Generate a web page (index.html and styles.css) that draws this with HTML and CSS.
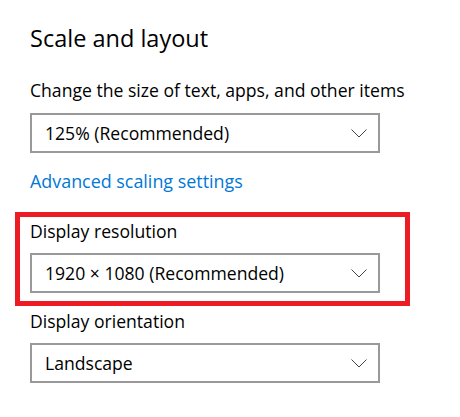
FILE: index.html
```html
<!DOCTYPE html>
<html lang="en">
<head>
<meta charset="utf-8">
<title>Scale and layout</title>
<link rel="stylesheet" href="styles.css">
</head>
<body>
<main class="page">
  <h1 class="title">Scale and layout</h1>
  <div class="label label-first">Change the size of text, apps, and other items</div>
  <div class="select">
    <span class="select-text">125% (Recommended)</span>
    <svg class="chevron" width="16" height="9" viewBox="0 0 16 9"><path d="M0.5 0.5 L8 8 L15.5 0.5" fill="none" stroke="#444444" stroke-width="1"/></svg>
  </div>
  <a class="link" href="#">Advanced scaling settings</a>
  <div class="highlight">
    <div class="label label-hl">Display resolution</div>
    <div class="select select-hl">
      <span class="select-text">1920 × 1080 (Recommended)</span>
      <svg class="chevron" width="16" height="9" viewBox="0 0 16 9"><path d="M0.5 0.5 L8 8 L15.5 0.5" fill="none" stroke="#444444" stroke-width="1"/></svg>
    </div>
  </div>
  <div class="label label-after">Display orientation</div>
  <div class="select select-hl">
    <span class="select-text">Landscape</span>
    <svg class="chevron" width="16" height="9" viewBox="0 0 16 9"><path d="M0.5 0.5 L8 8 L15.5 0.5" fill="none" stroke="#444444" stroke-width="1"/></svg>
  </div>
</main>
</body>
</html>
```
FILE: styles.css
```css
html, body {
  margin: 0;
  padding: 0;
  background: #ffffff;
}

body {
  font-family: "Open Sans", "Noto Sans", sans-serif;
  font-size: 17.6px;
  line-height: 24px;
  color: #000000;
}

.page {
  padding: 21.6px 0 0 30px;
  display: flex;
  flex-direction: column;
  align-items: flex-start;
}

.title {
  margin: 0;
  font-size: 23.5px;
  line-height: 32px;
  font-weight: 400;
}

.label {
  white-space: nowrap;
}

.label-first {
  margin-top: 24.9px;
}

.label-hl {
  margin-top: 0;
}

.label-after {
  margin-top: 3.5px;
}

.select {
  box-sizing: border-box;
  width: 350px;
  height: 40px;
  border: 2px solid #999999;
  margin-top: 10.5px;
  padding: 0 11px 0 13px;
  display: flex;
  align-items: center;
  justify-content: space-between;
  background: #ffffff;
}

.select-hl {
  margin-top: 9.5px;
}

.select-text {
  white-space: nowrap;
}

.chevron {
  display: block;
  margin-top: 1px;
}

.link {
  margin-top: 16.2px;
  font-size: 17.9px;
  color: #0078d7;
  text-decoration: none;
}

.highlight {
  margin: 18.8px 0 0 -15px;
  border: 5px solid #ed1c24;
  padding: 2.5px 25px 8px 10px;
}
```
